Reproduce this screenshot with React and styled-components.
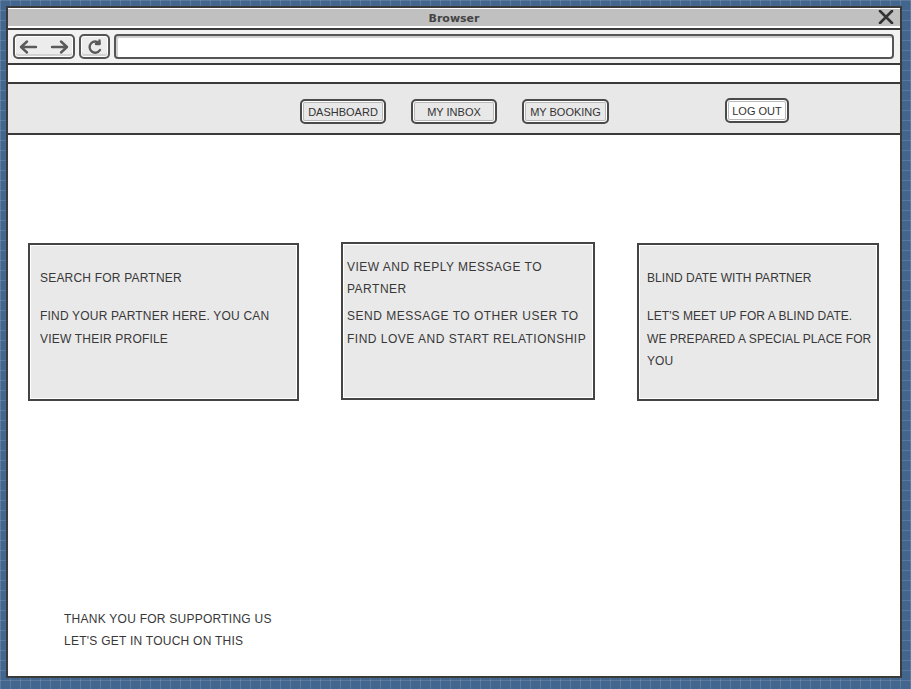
import React from "react";
import styled, { createGlobalStyle } from "styled-components";

const GlobalStyle = createGlobalStyle`
  html, body {
    margin: 0;
    padding: 0;
  }
  body {
    width: 911px;
    height: 689px;
    overflow: hidden;
    background-color: #43668f;
    background-image:
      linear-gradient(rgba(255, 255, 255, 0.12) 1px, transparent 1px),
      linear-gradient(90deg, rgba(255, 255, 255, 0.12) 1px, transparent 1px);
    background-size: 10px 10px;
    font-family: "Liberation Sans", Arial, sans-serif;
  }
`;

const Window = styled.div`
  box-sizing: border-box;
  margin: 6px 0 0 6px;
  width: 896px;
  height: 672px;
  border: 2px solid #3a3a3a;
  background: #fff;
  display: flex;
  flex-direction: column;
`;

const TitleBar = styled.div`
  height: 16px;
  padding-top: 1px;
  border-top: 1px solid #fff;
  border-bottom: 2px solid #fff;
  background: #c0c0c0;
  display: flex;
  align-items: center;
  justify-content: center;
  position: relative;
  font-family: "DejaVu Sans", sans-serif;
  font-weight: bold;
  font-size: 11px;
  color: #444;
`;

const CloseIcon = styled.svg`
  position: absolute;
  right: 6px;
  top: 1px;
`;

const Toolbar = styled.div`
  height: 33px;
  border-top: 2px solid #3a3a3a;
  border-bottom: 2px solid #3a3a3a;
  background: #f2f2f2;
  display: flex;
  align-items: center;
  gap: 4px;
  padding: 0 6px 0 5px;
`;

const ToolButton = styled.div`
  box-sizing: border-box;
  width: ${(p) => p.$w}px;
  height: 25px;
  border: 2px solid #555;
  border-radius: 5px;
  background: #ececec;
  box-shadow: inset 0 0 0 1px #fff, inset 0 -2px 0 1px #d2d2d2;
  display: flex;
  align-items: center;
  justify-content: center;
`;

const UrlField = styled.div`
  flex: 1;
  box-sizing: border-box;
  height: 25px;
  border: 2px solid #555;
  border-radius: 4px;
  background: #fff;
  box-shadow: inset 1px 1px 0 1px #cfcfcf;
`;

const Spacer = styled.div`
  height: 17px;
  border-bottom: 2px solid #3a3a3a;
  background: #fff;
`;

const Header = styled.div`
  box-sizing: border-box;
  height: 51px;
  border-bottom: 2px solid #3a3a3a;
  background: #e8e8e8;
  display: flex;
  align-items: flex-start;
  padding: 15px 0 0 292px;
`;

const Nav = styled.div`
  display: flex;
  gap: 25px;
`;

const NavButton = styled.div`
  box-sizing: border-box;
  width: ${(p) => p.$w}px;
  height: 25px;
  border: 2px solid #4a4a4a;
  border-radius: 5px;
  background: ${(p) => (p.$light ? "#fff" : "#e8e8e8")};
  box-shadow: inset 0 0 0 1px #fff, inset 0 0 0 2px #b9b9b9;
  display: flex;
  align-items: center;
  justify-content: center;
  font-size: 11px;
  color: #333;
  margin-left: ${(p) => p.$offset || 0}px;
  margin-top: ${(p) => p.$top || 0}px;
`;

const Content = styled.div`
  flex: 1;
  display: flex;
  flex-direction: column;
  background: #fff;
`;

const Cards = styled.div`
  display: flex;
  align-items: flex-start;
  gap: 42px;
  padding: 107px 0 0 20px;
`;

const Card = styled.div`
  box-sizing: border-box;
  width: ${(p) => p.$w}px;
  height: 158px;
  margin-top: ${(p) => p.$top ?? 1}px;
  border: 2px solid #444;
  background: #e9e9e9;
  box-shadow: inset 0 0 0 1px #fff;
  padding: ${(p) => (p.$top === 0 ? 12 : 11)}px 0 0 ${(p) => p.$pad}px;
  font-size: 12px;
  letter-spacing: ${(p) => p.$spacing}px;
  color: #383838;
  white-space: nowrap;
`;

const CardTitle = styled.div`
  height: 44px;
  display: flex;
  flex-direction: column;
  justify-content: center;
  line-height: 22px;
`;

const CardText = styled.div`
  margin-top: 5px;
  line-height: 22.5px;
`;

const Footer = styled.div`
  margin-top: auto;
  padding: 0 0 24px 56px;
  font-size: 12px;
  letter-spacing: 0.25px;
  line-height: 22px;
  color: #383838;
`;

const BackForward = () => (
  <svg width="52" height="16" viewBox="0 0 52 16">
    <g fill="none" stroke="#5a5a5a" strokeWidth="2.4" strokeLinecap="round" strokeLinejoin="round">
      <path d="M3 8h15M9 2.5L3 8l6 5.5" />
      <path d="M34 8h15M43 2.5L49 8l-6 5.5" />
    </g>
  </svg>
);

const Refresh = () => (
  <svg width="16" height="16" viewBox="0 0 16 16">
    <g fill="none" stroke="#5a5a5a" strokeWidth="2.4" strokeLinecap="round" strokeLinejoin="round">
      <path d="M12.5 4.5A5.6 5.6 0 1 0 13 11" />
      <path d="M12.5 1.5v3.5H9" />
    </g>
  </svg>
);

const cards = [
  {
    w: 271,
    pad: 10,
    spacing: 0.2,
    title: ["SEARCH FOR PARTNER"],
    text: ["FIND YOUR PARTNER HERE. YOU CAN", "VIEW THEIR PROFILE"],
  },
  {
    w: 254,
    pad: 4,
    top: 0,
    spacing: 0.5,
    title: ["VIEW AND REPLY MESSAGE TO", "PARTNER"],
    text: ["SEND MESSAGE TO OTHER USER TO", "FIND LOVE AND START RELATIONSHIP"],
  },
  {
    w: 242,
    pad: 8,
    spacing: 0.05,
    title: ["BLIND DATE WITH PARTNER"],
    text: [
      "LET'S MEET UP FOR A BLIND DATE.",
      "WE PREPARED A SPECIAL PLACE FOR",
      "YOU",
    ],
  },
];

const App = () => {
  return (
    <>
      <GlobalStyle />
      <Window>
        <TitleBar>
          Browser
          <CloseIcon width="16" height="14" viewBox="0 0 16 14">
            <path
              d="M2 1l12 12M14 1L2 13"
              stroke="#333"
              strokeWidth="2.6"
              strokeLinecap="round"
            />
          </CloseIcon>
        </TitleBar>
        <Toolbar>
          <ToolButton $w={62}>
            <BackForward />
          </ToolButton>
          <ToolButton $w={31}>
            <Refresh />
          </ToolButton>
          <UrlField />
        </Toolbar>
        <Spacer />
        <Header>
          <Nav>
            <NavButton $w={86}>DASHBOARD</NavButton>
            <NavButton $w={86}>MY INBOX</NavButton>
            <NavButton $w={87}>MY BOOKING</NavButton>
          </Nav>
          <NavButton $w={64} $light $offset={116} $top={-1}>
            LOG OUT
          </NavButton>
        </Header>
        <Content>
          <Cards>
            {cards.map((card) => (
              <Card
                key={card.title[0]}
                $w={card.w}
                $pad={card.pad}
                $top={card.top}
                $spacing={card.spacing}
              >
                <CardTitle>
                  {card.title.map((line) => (
                    <div key={line}>{line}</div>
                  ))}
                </CardTitle>
                <CardText>
                  {card.text.map((line) => (
                    <div key={line}>{line}</div>
                  ))}
                </CardText>
              </Card>
            ))}
          </Cards>
          <Footer>
            <div>THANK YOU FOR SUPPORTING US</div>
            <div>LET'S GET IN TOUCH ON THIS</div>
          </Footer>
        </Content>
      </Window>
    </>
  );
};

export default App;
